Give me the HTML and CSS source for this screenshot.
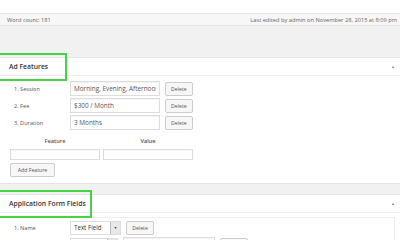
FILE: index.html
```html
<!DOCTYPE html>
<html lang="en">
<head>
  <meta charset="UTF-8" />
  <meta name="viewport" content="width=device-width, initial-scale=1.0" />
  <title>Edit Ad</title>
  <link rel="stylesheet" href="styles.css">
</head>
<body>

  <div class="editor-end"></div>
  <div class="status-bar">
    <span>Word count: 181</span>
    <span>Last edited by admin on November 28, 2015 at 8:09 pm</span>
  </div>

  <div class="postbox first">
    <div class="postbox-head">
      <h2>Ad Features</h2>
      <span class="mark mark-ad"></span>
      <span class="toggle">&#9650;</span>
    </div>
    <div class="postbox-body">
      <div class="feature-row">
        <span class="num">1. Session</span>
        <input class="text" type="text" value="Morning, Evening, Afternoon">
        <button class="btn">Delete</button>
      </div>
      <div class="feature-row">
        <span class="num">2. Fee</span>
        <input class="text" type="text" value="$300 / Month">
        <button class="btn">Delete</button>
      </div>
      <div class="feature-row">
        <span class="num">3. Duration</span>
        <input class="text" type="text" value="3 Months">
        <button class="btn">Delete</button>
      </div>

      <div class="new-feature">
        <div class="col">
          <label>Feature</label>
          <input class="text" type="text">
        </div>
        <div class="col">
          <label>Value</label>
          <input class="text" type="text">
        </div>
      </div>
      <button class="btn add">Add Feature</button>
    </div>
  </div>

  <div class="postbox">
    <div class="postbox-head">
      <h2>Application Form Fields</h2>
      <span class="mark mark-app"></span>
      <span class="toggle">&#9650;</span>
    </div>
    <div class="postbox-body">
      <div class="fields">
        <div class="field-row">
          <span class="num">1. Name</span>
          <div class="select">
            <span>Text Field</span>
            <span class="arrow">&#9660;</span>
          </div>
          <button class="btn">Delete</button>
        </div>
        <div class="field-row">
          <span class="num"></span>
          <div class="select short"><span></span><span class="arrow"></span></div>
          <input class="text wide" type="text">
          <button class="btn"></button>
        </div>
      </div>
    </div>
  </div>

</body>
</html>
```

FILE: styles.css
```css
body {
  margin: 0;
  background: #f1f1f1;
  font-family: "Open Sans", "Liberation Sans", sans-serif;
  color: #444;
  overflow: hidden;
  height: 240px;
}

.editor-end {
  height: 13px;
  background: #fff;
}

.status-bar {
  display: flex;
  justify-content: space-between;
  align-items: center;
  height: 11px;
  padding: 0 3px 0 7px;
  background: #f7f7f7;
  border-top: 1px solid #eaeaea;
  border-bottom: 1px solid #e5e5e5;
  font-size: 5.7px;
  color: #666;
}

.postbox {
  position: relative;
  background: #fff;
  border-top: 1px solid #e5e5e5;
  border-bottom: 1px solid #e5e5e5;
  margin-top: 10px;
}

.postbox.first {
  margin-top: 31px;
}

.postbox-head {
  position: relative;
  display: flex;
  align-items: center;
  justify-content: space-between;
  height: 17px;
  padding: 0 5px 0 9px;
  border-bottom: 1px solid #eee;
}

.postbox-head h2 {
  margin: 0;
  font-size: 6.8px;
  font-weight: 600;
  color: #333;
}

.toggle {
  font-size: 4px;
  color: #888;
}

/* green highlight frame drawn over the header */
.mark {
  position: absolute;
  left: -2px;
  top: -5px;
  height: 24px;
  border: 2px solid #46d446;
}

.mark-ad {
  width: 65px;
}

.mark-app {
  width: 90px;
}

.postbox-body {
  padding: 4px 10px 6px 10px;
}

.feature-row,
.field-row {
  display: flex;
  align-items: center;
  gap: 5px;
  height: 17px;
}

.num {
  box-sizing: border-box;
  width: 55px;
  padding-left: 4px;
  font-size: 5.6px;
  color: #555;
}

.text {
  box-sizing: border-box;
  width: 90px;
  height: 15px;
  margin: 0;
  padding: 0 3px;
  border: 1px solid #ddd;
  font-family: inherit;
  font-size: 6.4px;
  color: #555;
  box-shadow: inset 0 1px 1px rgba(0, 0, 0, 0.05);
}

.btn {
  box-sizing: border-box;
  height: 14px;
  padding: 0 5px;
  border: 1px solid #ccc;
  border-radius: 2px;
  background: #f7f7f7;
  font-family: inherit;
  font-size: 5.2px;
  color: #555;
}

.new-feature {
  display: flex;
  gap: 3px;
  margin-top: 6px;
}

.new-feature .col {
  display: flex;
  flex-direction: column;
  width: 90px;
}

.new-feature label {
  text-align: center;
  font-size: 5.6px;
  font-weight: 600;
  color: #555;
  height: 12px;
  line-height: 8px;
}

.new-feature .text {
  height: 11px;
}

.btn.add {
  display: block;
  margin-top: 3px;
  height: 14px;
  width: 45px;
  padding: 0;
}

.fields {
  border: 1px solid #eee;
  border-left: none;
  margin: 0 -5px 0 -10px;
  padding: 1px 0 0 10px;
  height: 40px;
}

.select {
  display: flex;
  align-items: center;
  justify-content: space-between;
  box-sizing: border-box;
  width: 51px;
  height: 14px;
  padding-left: 3px;
  border: 1px solid #ddd;
  font-size: 6.2px;
  color: #333;
}

.select .arrow {
  display: flex;
  align-items: center;
  justify-content: center;
  width: 9px;
  height: 12px;
  border-left: 1px solid #bbb;
  background: #e8e8e8;
  font-size: 3.5px;
  color: #333;
}

.select.short {
  width: 48px;
}

.field-row .btn {
  width: 28px;
}

.text.wide {
  width: 92px;
}
```
